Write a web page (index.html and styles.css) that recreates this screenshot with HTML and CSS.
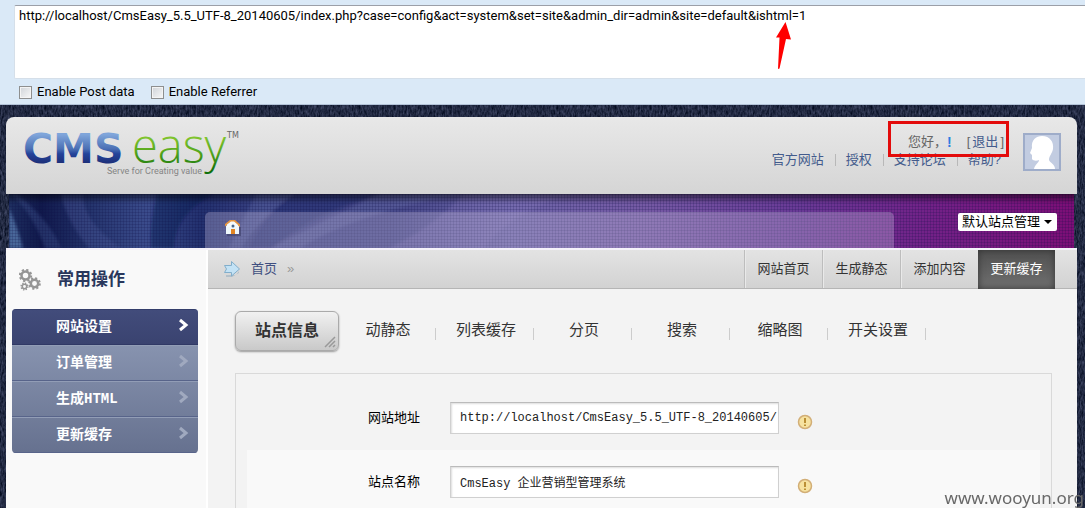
FILE: index.html
```html
<!DOCTYPE html>
<html lang="zh-CN">
<head>
<meta charset="utf-8">
<title>CmsEasy</title>
<link rel="stylesheet" href="styles.css">
</head>
<body>
<section class="hackbar">
  <textarea class="hackbar-url" aria-label="URL" spellcheck="false">http://localhost/CmsEasy_5.5_UTF-8_20140605/index.php?case=config&amp;act=system&amp;set=site&amp;admin_dir=admin&amp;site=default&amp;ishtml=1</textarea>
  <div class="hackbar-options">
    <label class="option"><input type="checkbox" class="check">Enable Post data</label>
    <label class="option"><input type="checkbox" class="check">Enable Referrer</label>
  </div>
  <svg class="arrow" width="16" height="48" viewBox="0 0 16 48" aria-hidden="true"><path d="M10.500 0 16 17.500 11 17 4.500 46.500 3 47 4.500 15.500 1 15.500z" fill="#f00"/></svg>
</section>

<div class="page">
  <header class="header">
    <svg class="logo" width="216" height="52" viewBox="0 0 216 52" role="img" aria-label="CMSeasy">
      <defs>
        <linearGradient id="blue" x1="0" y1="0" x2="0" y2="1"><stop offset=".2" stop-color="#7fa5da"/><stop offset=".5" stop-color="#4a6fb4"/><stop offset=".6" stop-color="#24439a"/><stop offset=".8" stop-color="#1d2f78"/></linearGradient>
        <linearGradient id="green" x1="0" y1="0" x2="0" y2="1"><stop offset=".3" stop-color="#8fce35"/><stop offset=".6" stop-color="#57a81d"/><stop offset=".9" stop-color="#12700c"/></linearGradient>
      </defs>
      <text class="logo-cms" x="-3" y="31">CMS</text>
      <text class="logo-easy" x="106" y="31">easy</text>
      <text class="logo-tm" x="201" y="6">TM</text>
      <text class="logo-tag" x="81" y="42">Serve for Creating value</text>
    </svg>
    <div class="account">
      <div class="account-text">
        <p class="greeting">您好，<b class="bang">!</b><span class="logout">[<a href="#">退出</a>]</span></p>
        <nav class="links"><a href="#">官方网站</a><a href="#">授权</a><a href="#">支持论坛</a><a href="#">帮助?</a></nav>
        <span class="highlight"></span>
      </div>
      <svg class="avatar" width="38" height="38" viewBox="0 0 38 38" aria-hidden="true"><rect x="1" y="1" width="36" height="36" fill="#c2cce1" stroke="#9eacc9" stroke-width="2"/><path d="M11 36C12 31 16 30 16 27 14 28 10 28 9 26L9 22 7 20 9 15C8 7 13 3 19 3 27 3 31 9 30 16 29 21 26 23 26 27 27 30 32 31 32 36z" fill="#fff"/></svg>
    </div>
  </header>

  <div class="banner">
    <svg class="banner-art" viewBox="0 0 1065 54" preserveAspectRatio="none" aria-hidden="true">
      <defs>
        <linearGradient id="sky"><stop offset="0" stop-color="#1e2f60"/><stop offset=".03" stop-color="#10194b"/><stop offset=".08" stop-color="#26366f"/><stop offset=".13" stop-color="#3b4c8c"/><stop offset=".18" stop-color="#22306e"/><stop offset=".24" stop-color="#3a4283"/><stop offset=".36" stop-color="#454788"/><stop offset=".47" stop-color="#6d65a8"/><stop offset=".6" stop-color="#7559a4"/><stop offset=".74" stop-color="#693a96"/><stop offset=".86" stop-color="#722288"/><stop offset="1" stop-color="#7c0e76"/></linearGradient>
        <linearGradient id="shade" x1="0" y1="0" x2="0" y2="1"><stop offset="0" stop-color="#000" stop-opacity=".5"/><stop offset=".18" stop-color="#000" stop-opacity="0"/></linearGradient>
        <pattern id="weave" width="3" height="3" patternUnits="userSpaceOnUse"><path d="M0 .5H3M.5 0V3" stroke="#0a0c40" stroke-opacity=".18"/></pattern>
        <filter id="soft"><feGaussianBlur stdDeviation="1.500"/></filter>
      </defs>
      <rect width="1065" height="54" fill="url(#sky)"/>
      <g filter="url(#soft)">
        <path d="M0 14Q8 32 14 54H0z" fill="#5b80b4" opacity=".7"/>
        <path d="M8 0Q42 28 52 54H36Q24 20 2 0z" fill="#40568f" opacity=".4"/>
        <path d="M52 0Q58 28 80 54H112Q74 28 74 0z" fill="#4a5a98" opacity=".4"/>
        <path d="M148 0Q140 30 142 54H165Q166 20 205 0z" fill="#0b184c" opacity=".4"/>
        <path d="M247 0 220 54H240Q255 20 285 0z" fill="#6574ad" opacity=".3"/>
        <path d="M285 0Q250 24 232 54H265Q300 20 375 0z" fill="#1f2466" opacity=".4"/>
        <path d="M370 0Q320 24 262 54H292Q340 22 450 0z" fill="#7479b2" opacity=".3"/>
        <path d="M455 0Q420 36 380 54H475Q500 20 560 0z" fill="#8378b8" opacity=".3"/>
      </g>
      <rect width="1065" height="54" fill="url(#weave)"/>
      <rect width="1065" height="54" fill="url(#shade)"/>
    </svg>
    <nav class="banner-tab">
      <a href="#" class="home" aria-label="Home"><svg width="18" height="17" viewBox="0 0 18 17"><path d="M3 8H17V17H3z" fill="#36375f" opacity=".5"/><path d="M2 7 9 1 15 7V15H2z" fill="#eef7fb"/><path d="M1 7.500V5L6 1H11L16 5.500V8L11 3.500H6z" fill="#e8963e"/><path d="M3 8V5.500L7 2.500H10L14 6V8z" fill="#f5fafc"/><rect x="7" y="10" width="4" height="5" fill="#e18422"/><circle cx="9" cy="7" r="1.500" fill="#47658a"/></svg></a>
    </nav>
    <select class="site-select" aria-label="站点"><option>默认站点管理</option></select>
  </div>

  <div class="body">
    <aside class="sidebar">
      <h2 class="side-title">
        <svg width="22" height="22" viewBox="0 0 22 22" fill="none" stroke="#959595" aria-hidden="true"><circle cx="6.500" cy="6.500" r="4" stroke-width="2.500"/><circle cx="6.500" cy="6.500" r="5.700" stroke-width="2" stroke-dasharray="2.240"/><circle cx="15.500" cy="14.500" r="3.700" stroke-width="2.500"/><circle cx="15.500" cy="14.500" r="5.300" stroke-width="2" stroke-dasharray="2.080"/><circle cx="5.500" cy="17.500" r="2.200" stroke-width="1.500"/><circle cx="5.500" cy="17.500" r="3.400" stroke-width="1.400" stroke-dasharray="1.340"/></svg>
        常用操作
      </h2>
      <nav class="menu">
        <a href="#" class="menu-item active">网站设置<svg class="chev" viewBox="0 0 12 14"><path d="M2 2 8 7 2 12"/></svg></a>
        <a href="#" class="menu-item">订单管理<svg class="chev" viewBox="0 0 12 14"><path d="M2 2 8 7 2 12"/></svg></a>
        <a href="#" class="menu-item">生成HTML<svg class="chev" viewBox="0 0 12 14"><path d="M2 2 8 7 2 12"/></svg></a>
        <a href="#" class="menu-item">更新缓存<svg class="chev" viewBox="0 0 12 14"><path d="M2 2 8 7 2 12"/></svg></a>
      </nav>
    </aside>

    <main class="main">
      <div class="toolbar">
        <div class="crumbs">
          <svg width="18" height="18" viewBox="0 0 18 18" aria-hidden="true"><path d="M3 15H13L16 11V13L9 17H3z" fill="#8fa9bb" opacity=".5"/><path d="M1.500 5.500H8.500V1.500L16.500 9 8.500 16V12.500H1.500L3.500 9z" fill="#c3e2f5" stroke="#82aecb"/></svg>
          <a href="#">首页</a><span class="sep">»</span>
        </div>
        <nav class="actions"><a href="#">网站首页</a><a href="#">生成静态</a><a href="#">添加内容</a><a href="#" class="current">更新缓存</a></nav>
      </div>
      <nav class="tabs">
        <a href="#" class="tab selected">站点信息<svg class="grip" width="12" height="12" viewBox="0 0 12 12"><path d="M1 11 11 1M5 11 11 5M9 11 11 9" stroke="#999" stroke-width="1.500"/></svg></a>
        <a href="#" class="tab">动静态</a><a href="#" class="tab">列表缓存</a><a href="#" class="tab">分页</a><a href="#" class="tab">搜索</a><a href="#" class="tab">缩略图</a><a href="#" class="tab">开关设置</a>
      </nav>
      <form class="panel">
        <div class="row">
          <label for="url">网站地址</label>
          <input id="url" type="text" value="http://localhost/CmsEasy_5.5_UTF-8_20140605/">
          <svg class="tip" width="16" height="16" viewBox="0 0 16 16"><circle cx="8" cy="8" r="6.500" fill="#f6e2a0" stroke="#d2ae76" stroke-width="1.500"/><path d="M8 4V9M8 10.500V12" stroke="#bb8f35" stroke-width="2"/></svg>
        </div>
        <div class="row alt">
          <label for="name">站点名称</label>
          <input id="name" type="text" value="CmsEasy 企业营销型管理系统">
          <svg class="tip" width="16" height="16" viewBox="0 0 16 16"><circle cx="8" cy="8" r="6.500" fill="#f6e2a0" stroke="#d2ae76" stroke-width="1.500"/><path d="M8 4V9M8 10.500V12" stroke="#bb8f35" stroke-width="2"/></svg>
        </div>
      </form>
    </main>
  </div>
</div>
<div class="watermark">www.wooyun.org</div>
</body>
</html>
```
FILE: styles.css
```css
* { box-sizing: border-box; }
body {
  margin: 0;
  height: 100vh;
  overflow: hidden;
  display: flex;
  flex-direction: column;
  font: 13px/18px "Liberation Sans", "Noto Sans CJK SC", sans-serif;
  color: #000;
  background: #222c45 url("data:image/svg+xml,%3Csvg xmlns='http://www.w3.org/2000/svg' width='256' height='256'%3E%3Cfilter id='n' x='0' y='0' width='1' height='1' color-interpolation-filters='sRGB'%3E%3CfeTurbulence type='fractalNoise' baseFrequency='.6 .2' numOctaves='3' stitchTiles='stitch'/%3E%3CfeColorMatrix values='.35 0 0 0 -.04 .35 0 0 0 -.01 .4 0 0 0 .06 0 0 0 0 1'/%3E%3C/filter%3E%3Crect width='256' height='256' filter='url(%23n)'/%3E%3C/svg%3E");
}
a { color: inherit; text-decoration: none; }
h2, p { margin: 0; }

.hackbar {
  position: relative;
  flex: none;
  padding: 5px 0 3px 14px;
  background: #dae9f7;
  border-bottom: 1px solid #b3c3d8;
  font: 13px/18px Roboto, sans-serif;
}
.hackbar-url {
  display: block;
  width: 100%;
  height: 74px;
  padding: 1px 4px;
  border: 1px solid #d5dfe9;
  border-top-color: #9b9fa8;
  border-right: 0;
  border-radius: 2px 0 0 2px;
  background: #fff;
  font: inherit;
  color: #000;
  resize: none;
  outline: 0;
}
.hackbar-options { display: flex; gap: 16px; padding: 4px 5px 0; }
.option { display: flex; align-items: center; gap: 5px; }
.check {
  appearance: none;
  width: 13px;
  height: 13px;
  margin: 0;
  border: 1px solid #8e8f8f;
  background: linear-gradient(135deg, #cfd3d8, #f8f8f8);
  box-shadow: inset 0 0 0 1px #f4f4f4;
}
.arrow { position: absolute; left: 775px; top: 22px; }

.page { flex: 1; min-height: 0; padding: 12px 8px 0 6px; display: flex; flex-direction: column; }
.header {
  flex: none;
  display: flex;
  justify-content: space-between;
  padding: 15px 16px 10px 20px;
  border-radius: 8px 8px 0 0;
  background: linear-gradient(#e8e8e8, #d5d5d5);
}
.logo { overflow: visible; }
.logo-cms { font: bold 41px "DejaVu Sans", sans-serif; fill: url(#blue); }
.logo-easy { font: 300 47px "Open Sans", sans-serif; fill: url(#green); }
.logo-tm { font: 8px "DejaVu Sans", sans-serif; fill: #666; }
.logo-tag { font: 9px Roboto, sans-serif; fill: #858585; }
.account { display: flex; gap: 19px; color: #666; }
.account-text { position: relative; display: flex; flex-direction: column; padding-top: 1px; }
.greeting { display: flex; justify-content: flex-end; }
.bang { color: #2b7de0; font-size: 14px; }
.logout { margin-left: 15px; }
.logout a { margin: 0 2px; }
.logout a, .links { color: #435b8c; }
.links { display: flex; padding-right: 3px; }
.links a + a { margin-left: 11px; padding-left: 11px; background: linear-gradient(#b8b8b8, #b8b8b8) left center / 1px 12px no-repeat; }
.highlight { position: absolute; top: -11px; right: -5px; width: 121px; height: 36px; border: 3px solid #e30b0b; }
.avatar { margin-top: 1px; }

.banner { position: relative; flex: none; display: flex; justify-content: space-between; height: 54px; margin: 0 3px; }
.banner-art { position: absolute; width: 100%; height: 100%; }
.banner-tab {
  position: relative;
  flex: 1;
  margin: 18px 64px 0 196px;
  padding: 7px 19px 0;
  border-radius: 5px 5px 0 0;
  background: rgba(200, 190, 220, .32);
}
.home { display: inline-block; }
.home svg { display: block; }
.site-select {
  position: relative;
  width: 99px;
  height: 18px;
  margin: 19px 17px 0 0;
  padding: 0 0 0 4px;
  appearance: none;
  border: 0;
  border-radius: 2px;
  font: inherit;
  color: #000;
  background: #fff url("data:image/svg+xml,%3Csvg xmlns='http://www.w3.org/2000/svg' width='8' height='4'%3E%3Cpath d='M0 0H8L4 4z'/%3E%3C/svg%3E") right 5px center no-repeat;
}

.body { flex: 1; min-height: 0; display: flex; border-top: 2px solid #f5f2fa; }
.sidebar { flex: none; width: 202px; padding: 0 8px 0 6px; background: #f9f9f9; border-right: 2px solid #fff; }
.side-title {
  display: flex;
  align-items: center;
  gap: 16px;
  height: 59px;
  padding: 0 0 0 7px;
  font-size: 17px;
  line-height: 24px;
  color: #29375c;
}
.menu { border-radius: 4px; overflow: hidden; background: linear-gradient(#8793af 36px, #66718f); }
.menu-item {
  display: flex;
  align-items: center;
  justify-content: space-between;
  height: 36px;
  padding: 0 8px 0 44px;
  border-top: 1px solid #929db6;
  border-bottom: 1px solid #58648a;
  color: #fff;
  font: bold 14px/18px "Liberation Mono", "Noto Sans CJK SC", monospace;
}
.active { background: linear-gradient(#424c7b, #3a4370); border-top-color: #343e6b; border-bottom-color: #303966; }
.chev { width: 12px; height: 14px; margin-bottom: 4px; fill: none; stroke: #a0a9bf; stroke-width: 3; }
.active .chev { stroke: #fff; }

.main { flex: 1; min-width: 0; background: #f3f3f3; }
.toolbar {
  display: flex;
  justify-content: space-between;
  height: 39px;
  padding-right: 22px;
  border-bottom: 1px solid #b5b5b5;
  background: linear-gradient(#e3e3e3, #d2d2d2);
}
.crumbs { display: flex; align-items: center; padding-left: 15px; color: #3f4f80; }
.crumbs a { margin-left: 10px; }
.sep { margin-left: 10px; color: #999; }
.actions { display: flex; }
.actions a { width: 78px; line-height: 38px; text-align: center; color: #333; border-left: 1px solid #bdbdbd; box-shadow: inset 1px 0 #e9e9e9; }
.actions .current { width: 77px; height: 39px; border: 0; color: #fff; background: linear-gradient(#505050, #707070); box-shadow: inset 0 0 7px #333; }

.tabs { display: flex; padding: 22px 27px; }
.tab {
  width: 98px;
  line-height: 38px;
  text-align: center;
  font-size: 15px;
  color: #333;
  background: linear-gradient(#ccc, #ccc) right 1px top 17px / 1px 12px no-repeat;
}
.selected {
  position: relative;
  width: 104px;
  height: 40px;
  border: 1px solid #aaa;
  border-radius: 6px;
  background: linear-gradient(#f1f1f1, #c9c9c9);
  box-shadow: 0 1px 2px #999;
  font-size: 16px;
  font-weight: bold;
}
.grip { position: absolute; right: 2px; bottom: 2px; }
.panel { margin: 0 25px 0 27px; padding: 12px 11px; border: 1px solid #d9d9d9; }
.row { display: flex; align-items: center; height: 64px; padding-left: 121px; }
.row label { width: 82px; }
.row input {
  width: 329px;
  height: 32px;
  padding: 0 0 0 9px;
  border: 1px solid #d0d0d0;
  border-top-color: #bbb;
  background: #fff;
  box-shadow: inset 1px 1px 2px #ddd;
  font: 12px/18px "Liberation Mono", "Noto Sans CJK SC", monospace;
  color: #222;
  outline: 0;
}
.alt { background: #f9f9f9; }
.tip { margin: 8px 0 0 18px; }

.watermark { position: fixed; right: 1px; bottom: 0; font: 17px/20px "Noto Sans", sans-serif; color: #686868; }
```
